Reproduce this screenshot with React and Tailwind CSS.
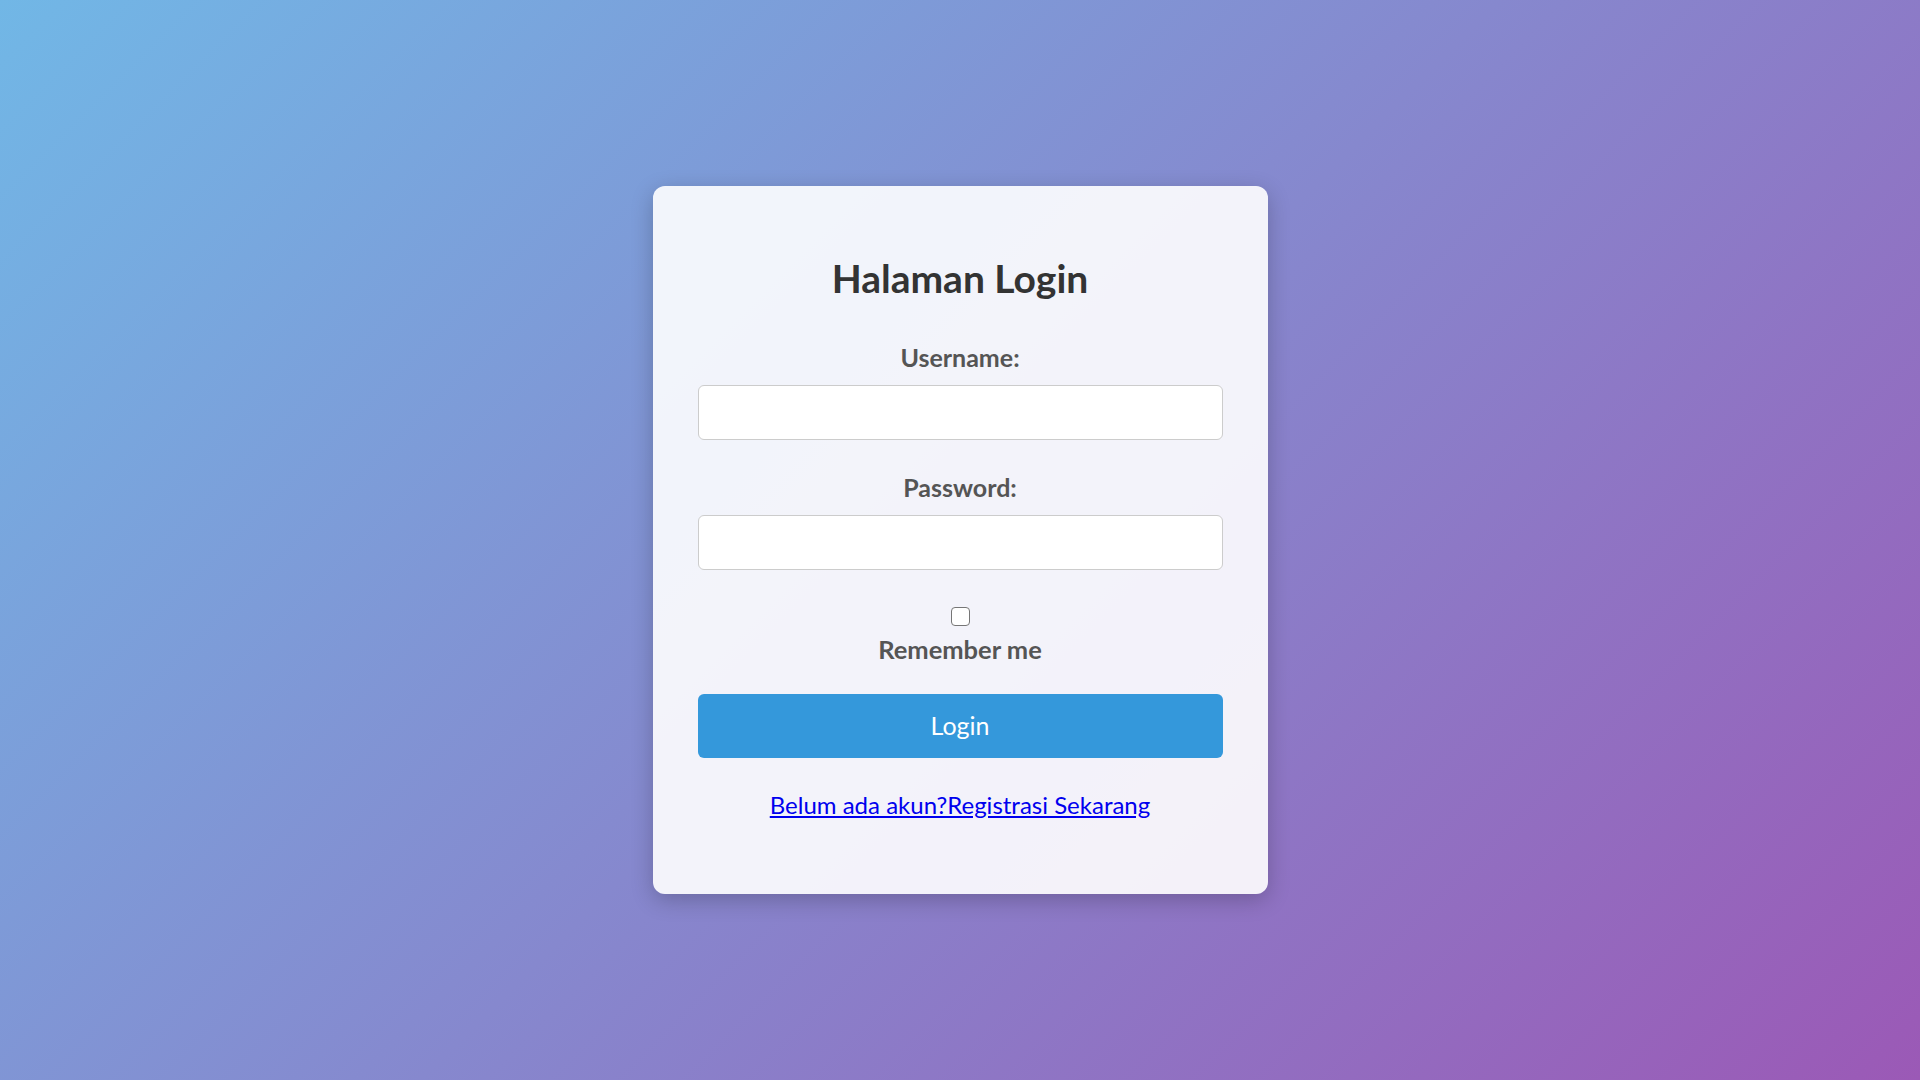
export default function App() {
  return (
    <div className="min-h-screen w-full flex items-center justify-center bg-[linear-gradient(135deg,#71b7e6,#9b59b6)] font-['Lato','Noto_Sans',sans-serif]">
      <div className="w-[615px] bg-white/90 rounded-[12px] shadow-[0_6px_22px_rgba(0,0,0,0.22)] px-[45px] pt-[67px] pb-[73px] flex flex-col items-center">
        <h2 className="text-[39px] leading-[50px] font-bold text-[#333]">Halaman Login</h2>
        <label className="mt-[38px] text-[25px] leading-[32px] font-bold text-[#555]">Username:</label>
        <input type="text" className="mt-[12px] w-full h-[55px] bg-white border border-[#cccccc] rounded-[6px] px-3 outline-none" />
        <label className="mt-[31px] text-[25px] leading-[32px] font-bold text-[#555]">Password:</label>
        <input type="password" className="mt-[12px] w-full h-[55px] bg-white border border-[#cccccc] rounded-[6px] px-3 outline-none" />
        <input type="checkbox" className="mt-[37px] appearance-none w-[19px] h-[19px] border-[1.5px] border-[#767676] rounded-[4px] bg-white" />
        <label className="mt-[7px] text-[25.5px] leading-[32px] font-bold text-[#555]">Remember me</label>
        <button className="mt-[29px] w-full h-[64px] bg-[#3498db] rounded-[6px] text-white text-[25px] font-['Lato','Noto_Sans',sans-serif]">Login</button>
        <a href="#" className="mt-[31px] text-[24px] leading-[32px] text-[#0000ee] underline">Belum ada akun?Registrasi Sekarang</a>
      </div>
    </div>
  );
}
